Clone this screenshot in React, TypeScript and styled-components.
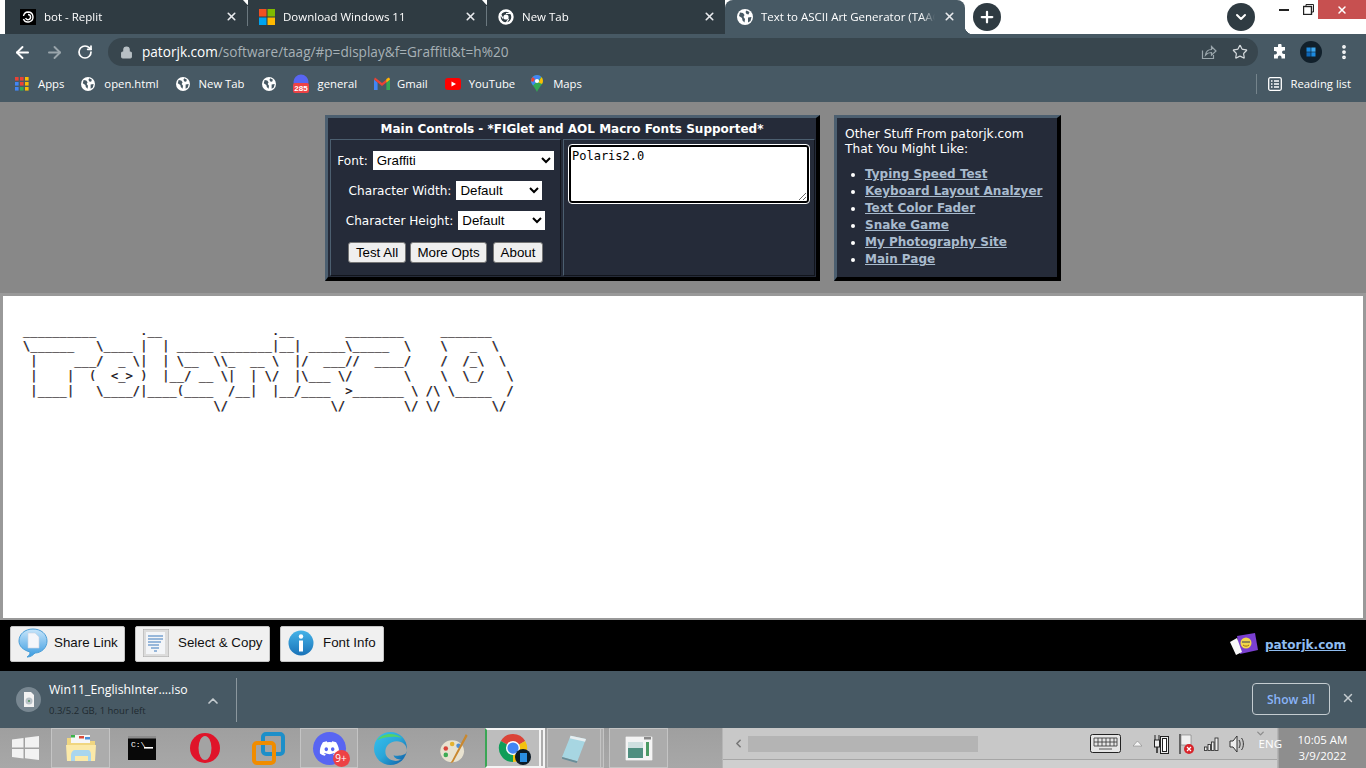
import styled, { createGlobalStyle } from "styled-components";
import { ArrowLeft, ArrowRight, RotateCw, Star, MoreVertical, ChevronDown, ChevronUp, Plus, X, Lock, ChevronLeft } from "lucide-react";
import { FaDiscord } from "react-icons/fa";
import type { ReactNode } from "react";

const GlobalStyle = createGlobalStyle`
  html, body { margin: 0; padding: 0; height: 768px; overflow: hidden; background: #888888; }
  * { box-sizing: border-box; }
`;

const CHROME_FONT = `"Open Sans", "Noto Sans", sans-serif`;
const PAGE_FONT = `"DejaVu Sans", sans-serif`;
const BAR = "#475964";
const DARK_TAB = "#2f3b42";

const Screen = styled.div`
  width: 1366px;
  height: 768px;
  display: flex;
  flex-direction: column;
  overflow: hidden;
  font-family: ${CHROME_FONT};
`;

/* ---------- tab strip ---------- */
const TabStrip = styled.div`
  height: 34px;
  background: #ffffff;
  display: flex;
  align-items: stretch;
  padding-left: 5px;
  flex: none;
`;
const Tab = styled.div<{ $active?: boolean; $w: number; $pl: number }>`
  width: ${(p) => p.$w}px;
  flex: none;
  background: ${(p) => (p.$active ? BAR : DARK_TAB)};
  color: #ffffff;
  display: flex;
  align-items: center;
  gap: 8px;
  padding: 0 9px 1px ${(p) => p.$pl}px;
  font-size: 11.5px;
  border-radius: ${(p) => (p.$active ? "8px 8px 0 0" : "0")};
  position: relative;
  ${(p) =>
    p.$active
      ? `
    &::before {
      content: "";
      position: absolute;
      left: -8px;
      bottom: 0;
      width: 8px;
      height: 8px;
      background: ${BAR};
    }
    &::after {
      content: "";
      position: absolute;
      right: -8px;
      bottom: 0;
      width: 8px;
      height: 8px;
      background: radial-gradient(circle at 100% 0, transparent 8px, ${BAR} 8.5px);
    }
  `
      : ""}
`;
const TabGroup = styled.div`
  display: flex;
  flex: none;
  position: relative;
  z-index: 1;
  background: ${DARK_TAB};
  border-radius: 8px;
`;
const TabDivider = styled.div`
  width: 1px;
  margin: 6px 0 8px;
  background: #6b787f;
  flex: none;
  position: relative;
  &::before {
    content: "";
    position: absolute;
    top: -6px;
    left: -4px;
    width: 9px;
    height: 5px;
    background: #ffffff;
    clip-path: polygon(0 0, 100% 0, 50% 100%);
  }
`;
const TabTitle = styled.span`
  flex: 1;
  white-space: nowrap;
  overflow: hidden;
  mask-image: linear-gradient(to right, #000 calc(100% - 14px), transparent);
`;
const TabClose = styled(X)`
  flex: none;
  width: 13px;
  height: 13px;
  stroke-width: 3;
  color: #e8eaed;
`;
const RoundButton = styled.div<{ $ml: number }>`
  width: 28px;
  height: 28px;
  margin: 3px 0 0 ${(p) => p.$ml}px;
  border-radius: 50%;
  background: ${DARK_TAB};
  color: #ffffff;
  display: flex;
  align-items: center;
  justify-content: center;
  flex: none;
`;
const WindowButtons = styled.div`
  margin-left: 15px;
  display: flex;
  flex: none;
  height: 19px;
  align-items: flex-start;
`;
const WinBtn = styled.div<{ $w: number; $close?: boolean }>`
  width: ${(p) => p.$w}px;
  height: 19px;
  background: ${(p) => (p.$close ? "#c75050" : "transparent")};
  color: ${(p) => (p.$close ? "#fff" : "#222")};
  display: flex;
  align-items: center;
  justify-content: center;
`;

/* ---------- toolbar ---------- */
const Toolbar = styled.div`
  height: 32px;
  background: ${BAR};
  flex: none;
  display: flex;
  align-items: flex-end;
  padding-left: 13px;
  color: #ffffff;
`;
const NavBtn = styled.div<{ $dim?: boolean; $w: number }>`
  width: ${(p) => p.$w}px;
  height: 28px;
  display: flex;
  align-items: center;
  color: ${(p) => (p.$dim ? "#9aa5ab" : "#ffffff")};
`;
const Omnibox = styled.div`
  width: 1150px;
  height: 28px;
  background: #38464e;
  border-radius: 14px;
  display: flex;
  align-items: center;
  padding: 0 10px 0 12px;
  font-size: 13.6px;
  margin-left: 3px;
`;
const Url = styled.div`
  margin-left: 9px;
  padding-bottom: 1px;
  flex: 1;
  color: #a7b1b6;
  white-space: nowrap;
  b { font-weight: 400; color: #ffffff; }
`;
const ToolIcons = styled.div<{ $ml?: number }>`
  display: flex;
  align-items: center;
  height: 28px;
  margin-left: ${(p) => p.$ml ?? 0}px;
`;

/* ---------- bookmarks ---------- */
const Bookmarks = styled.div`
  height: 36px;
  background: ${BAR};
  flex: none;
  display: flex;
  align-items: center;
  padding: 0 15px 1px 15px;
  color: #ffffff;
  font-size: 11.3px;
  gap: 17px;
`;
const Mark = styled.div<{ $gap?: number; $mr?: number }>`
  display: flex;
  align-items: center;
  gap: ${(p) => p.$gap ?? 9}px;
  margin-right: ${(p) => p.$mr ?? 0}px;
  white-space: nowrap;
`;
const ReadingList = styled(Mark)`
  margin-left: auto;
  border-left: 1px solid #75848c;
  height: 20px;
  padding-left: 11px;
`;

/* ---------- page ---------- */
const Page = styled.div`
  height: 191px;
  flex: none;
  background: #888888;
  display: flex;
  gap: 14px;
  padding: 13px 0 0 325px;
  font-family: ${PAGE_FONT};
  font-size: 12.25px;
  color: #ffffff;
`;
const Panel = styled.div<{ $w: number }>`
  width: ${(p) => p.$w}px;
  height: 166px;
  background: #252b39;
  border-style: solid;
  border-width: 3px 4px 4px 3px;
  border-color: #4c5f70 #000000 #000000 #4c5f70;
`;
const PanelTitle = styled.div`
  font-weight: 700;
  font-size: 12px;
  text-align: center;
  height: 21px;
  line-height: 22px;
`;
const PanelBody = styled.div`
  display: grid;
  grid-template-columns: 231px 252px;
  gap: 2px;
  padding: 0 0 0 2px;
`;
const Cell = styled.div`
  height: 137px;
  border-style: solid;
  border-width: 1px;
  border-color: #4c5f70 #11141b #11141b #4c5f70;
`;
const FormCell = styled(Cell)`
  display: flex;
  flex-direction: column;
  align-items: center;
  padding-top: 11px;
  gap: 11px;
`;
const FieldRow = styled.label`
  display: flex;
  align-items: center;
  gap: 5px;
  height: 19px;
  font-size: 12.1px;
`;
const Select = styled.select<{ $w: number }>`
  width: ${(p) => p.$w}px;
  height: 19px;
  border: 0;
  border-radius: 0;
  background: #ffffff;
  color: #000;
  padding: 0;
  font-family: "Liberation Sans", sans-serif;
  font-size: 13.33px;
`;
const ButtonRow = styled.div`
  display: flex;
  gap: 4px;
  margin-top: 1px;
`;
const FormButton = styled.button<{ $w: number; $ml?: number }>`
  width: ${(p) => p.$w}px;
  height: 21px;
  padding: 0;
  margin-left: ${(p) => p.$ml ?? 0}px;
  background: #efefef;
  border: 1px solid #767676;
  border-radius: 3px;
  color: #000;
  font-family: "Liberation Sans", sans-serif;
  font-size: 13.33px;
`;
const TextCell = styled(Cell)`
  padding: 5px 0 0 5px;
`;
const TextArea = styled.textarea`
  display: block;
  width: 240px;
  height: 58px;
  border: 2px solid #000000;
  outline: 1px solid #ffffff;
  border-radius: 3px;
  background: #fff;
  padding: 2px 1px;
  margin: 0;
  font-family: "DejaVu Sans Mono", monospace;
  font-size: 12px;
  line-height: 14px;
  color: #000;
`;
const SideText = styled.div`
  padding: 9px 0 0 8px;
  line-height: 15px;
`;
const SideList = styled.ul`
  margin: 9px 0 0;
  padding: 0 0 0 20px;
  line-height: 17px;
  li::marker { color: #ffffff; }
`;
const SideLink = styled.a`
  font-weight: 700;
  font-size: 12px;
  color: #a9bbce;
  text-decoration: underline;
`;

/* ---------- output ---------- */
const Output = styled.div`
  height: 327px;
  flex: none;
  background: #ffffff;
  border-style: solid;
  border-color: #999999;
  border-width: 3px 3px 2px 3px;
  padding: 28px 0 0 20px;
`;
const Ascii = styled.pre`
  margin: 0;
  font-family: "DejaVu Sans Mono", monospace;
  font-size: 12px;
  letter-spacing: 0.1px;
  line-height: 15px;
  color: #16161c;
  text-shadow: -0.4px 0 rgba(224, 130, 30, 0.55), 0.4px 0 rgba(40, 120, 230, 0.6);
`;

/* ---------- site bar ---------- */
const SiteBar = styled.div`
  height: 51px;
  flex: none;
  background: #000000;
  display: flex;
  align-items: flex-start;
  padding: 6px 20px 0 10px;
  gap: 10px;
`;
const SiteButton = styled.div<{ $w: number }>`
  width: ${(p) => p.$w}px;
  height: 36px;
  background: #f0f0f0;
  border: 1px solid #c4c4c4;
  border-radius: 2px;
  display: flex;
  align-items: center;
  gap: 6px;
  padding: 0 0 3px 7px;
  font-family: "Liberation Sans", sans-serif;
  font-size: 13.33px;
  color: #111;
`;
const SiteLabel = styled.span`
  margin-left: 3px;
`;
const SiteBrand = styled.a`
  margin: 7px 0 0 auto;
  display: flex;
  align-items: center;
  gap: 6px;
  font-family: ${PAGE_FONT};
  font-weight: 700;
  font-size: 12px;
  color: #8fbcef;
  text-decoration: underline;
`;

/* ---------- download bar ---------- */
const DownloadBar = styled.div`
  height: 57px;
  flex: none;
  background: ${BAR};
  display: flex;
  align-items: flex-start;
  color: #ffffff;
  padding: 7px 0 0 16px;
`;
const FileIcon = styled.div`
  width: 25px;
  height: 25px;
  margin-top: 9px;
  border-radius: 50%;
  background: #788791;
  display: flex;
  align-items: center;
  justify-content: center;
  flex: none;
`;
const FileText = styled.div`
  margin-left: 8px;
  width: 156px;
`;
const FileName = styled.div`
  font-size: 12.3px;
  line-height: 16px;
  margin-top: 4px;
  white-space: nowrap;
`;
const FileMeta = styled.div`
  font-size: 9.5px;
  color: #1f2a30;
  line-height: 13px;
  margin-top: 6px;
  white-space: nowrap;
`;
const DownloadSep = styled.div`
  width: 1px;
  height: 44px;
  margin-left: 15px;
  background: #8b979e;
`;
const ShowAll = styled.div`
  margin: 5px 0 0 auto;
  width: 78px;
  height: 32px;
  border: 1px solid #c4ccd0;
  border-radius: 4px;
  color: #8ab4f8;
  font-size: 12px;
  font-weight: 600;
  display: flex;
  align-items: center;
  justify-content: center;
`;
const BarClose = styled(X)`
  margin: 13px 11px 0 11px;
  width: 14px;
  height: 14px;
  stroke-width: 2.5;
  color: #c5ccd0;
`;

/* ---------- taskbar ---------- */
const Taskbar = styled.div`
  height: 40px;
  flex: none;
  background: linear-gradient(#9f9f9f, #a8a8a8);
  display: flex;
  align-items: stretch;
`;
const TaskItem = styled.div<{ $w: number; $boxed?: boolean; $active?: boolean; $mr?: number }>`
  width: ${(p) => p.$w}px;
  flex: none;
  margin-right: ${(p) => p.$mr ?? 0}px;
  display: flex;
  align-items: center;
  justify-content: center;
  background: ${(p) => (p.$active ? "#bdbdbd" : p.$boxed ? "#acacac" : "transparent")};
  border: ${(p) => (p.$active ? "2px solid #f4f4f4" : p.$boxed ? "1px solid #c4c4c4" : "0")};
  ${(p) => (p.$active ? "border-left-color:#3aa655;" : "")}
`;
const Sliver = styled.div<{ $w: number; $light?: boolean; $mr?: number }>`
  width: ${(p) => p.$w}px;
  flex: none;
  margin-right: ${(p) => p.$mr ?? 0}px;
  background: #acacac;
  border: 1px solid #c4c4c4;
  border-left: 0;
  ${(p) => (p.$light ? "border: 2px solid #f4f4f4; border-left: 0;" : "")}
`;
const DiscordBadge = styled.div`
  width: 33px;
  height: 33px;
  position: relative;
  border-radius: 50%;
  background: #5865f2;
  color: #fff;
  display: flex;
  align-items: center;
  justify-content: center;
`;
const RedDot = styled.span`
  position: absolute;
  right: -4px;
  bottom: -2px;
  width: 17px;
  height: 17px;
  border-radius: 50%;
  background: #ed4245;
  color: #fff;
  font-size: 10px;
  line-height: 17px;
  text-align: center;
`;
const ChromeWrap = styled.div`
  position: relative;
  width: 30px;
  height: 30px;
`;
const ProfileDot = styled.div`
  position: absolute;
  right: -3px;
  bottom: -2px;
  width: 16px;
  height: 16px;
  border-radius: 50%;
  background: #0c1a26;
  display: flex;
  align-items: center;
  justify-content: center;
  &::after {
    content: "";
    width: 7px;
    height: 9px;
    background: #2a8de0;
  }
`;
const Tray = styled.div`
  width: 556px;
  margin-left: 54px;
  background: #c8c8c8;
  border-left: 1px solid #b5b5b5;
  border-right: 1px solid #b5b5b5;
  flex: none;
  position: relative;
  display: flex;
  flex-direction: column;
`;
const TrayMain = styled.div`
  flex: 1;
  display: flex;
  align-items: center;
  padding-left: 9px;
  border-bottom: 1px solid #a6a6a6;
`;
const TrayFoot = styled.div`
  height: 8px;
  background: #cfcfcf;
`;
const ScrollThumb = styled.div`
  width: 230px;
  height: 16px;
  margin-left: 3px;
  background: #b4b4b4;
`;
const ScrollDown = styled(ChevronDown)`
  position: absolute;
  top: 0;
  right: 11px;
  width: 11px;
  height: 11px;
  stroke-width: 3;
  color: #8d8d8d;
`;
const TrayIcons = styled.div`
  margin-left: auto;
  margin-right: -5px;
  display: flex;
  align-items: center;
  gap: 8px;
  position: relative;
  z-index: 1;
`;
const TraySlot = styled.span<{ $ml: number }>`
  display: flex;
  margin-left: ${(p) => p.$ml}px;
`;
const Eng = styled.span`
  margin-left: 4px;
  color: #ffffff;
  font-size: 11.5px;
`;
const Clock = styled.div`
  flex: 1;
  margin-left: 1px;
  background: #8e8e8e;
  color: #ffffff;
  font-size: 11.5px;
  line-height: 16px;
  padding-top: 4px;
  text-align: center;
`;

/* ---------- icons ---------- */
const Globe = ({ size = 14 }: { size?: number }) => (
  <svg width={size} height={size} viewBox="0 0 16 16" style={{ flex: "none" }}>
    <circle cx="8" cy="8" r="8" fill="#fff" />
    <path d="M3 3.5l3 .5 1.5 2-1 2 1.5 2-.5 3.500-2-2-.5-2.500L2 7zM9.500 1.500l3 1.500-1 2.500-2-.5-1-2zM11 8.500l3.500-.5-1 4-2.500 1.500z" fill={BAR} />
  </svg>
);

const TabChrome = () => (
  <svg width="16" height="16" viewBox="0 0 16 16" fill="none" stroke="#fff" style={{ flex: "none" }}>
    <circle cx="8" cy="8" r="6.500" strokeWidth="2.400" />
    <circle cx="8" cy="8" r="2.600" fill="#fff" stroke="none" />
    <path d="M8 4.500h6.500M5 9.500 1.800 4M10.800 9.800 7.500 15" strokeWidth="1.200" />
  </svg>
);

const ChromeColor = () => (
  <svg width="30" height="30" viewBox="0 0 32 32">
    <path d="M16 16 3 8.500A15 15 0 0 1 29 8.500z" fill="#db4437" />
    <path d="M16 16 29 8.500A15 15 0 0 1 16 31z" fill="#f4c20d" />
    <path d="M16 16V31A15 15 0 0 1 3 8.500z" fill="#0f9d58" />
    <circle cx="16" cy="16" r="7.500" fill="#fff" />
    <circle cx="16" cy="16" r="6" fill="#4285f4" />
  </svg>
);

const ReplitIcon = () => (
  <svg width="16" height="16" viewBox="0 0 16 16" style={{ flex: "none" }}>
    <rect width="16" height="16" fill="#000" />
    <path d="M8 3a5 5 0 1 1-4.600 7M8 5.500a2.600 2.600 0 1 1-2.400 3.600M3.500 7A4.800 4.800 0 0 1 8 3" stroke="#fff" strokeWidth="1.400" fill="none" />
  </svg>
);

const MsLogo = () => (
  <svg width="16" height="16" viewBox="0 0 16 16" style={{ flex: "none" }}>
    <rect width="7.500" height="7.500" fill="#f25022" />
    <rect x="8.500" width="7.500" height="7.500" fill="#7fba00" />
    <rect y="8.500" width="7.500" height="7.500" fill="#00a4ef" />
    <rect x="8.500" y="8.500" width="7.500" height="7.500" fill="#ffb900" />
  </svg>
);

const AppsGrid = () => (
  <svg width="14" height="14" viewBox="0 0 14 14" style={{ flex: "none" }}>
    {["#ea4335", "#ea4335", "#fbbc04", "#4285f4", "#ea4335", "#fbbc04", "#4285f4", "#34a853", "#fbbc04"].map((c, i) => (
      <rect key={i} x={(i % 3) * 5} y={Math.floor(i / 3) * 5} width="3.600" height="3.600" fill={c} />
    ))}
  </svg>
);

const BadgeIcon = () => (
  <svg width="16" height="20" viewBox="0 0 16 20" style={{ flex: "none" }}>
    <circle cx="8" cy="8" r="7.500" fill="#5865f2" />
    <rect y="9" width="16" height="10" rx="2" fill="#ed4245" />
    <text x="8" y="17" textAnchor="middle" fontSize="8" fontWeight="700" fontFamily="Liberation Sans" fill="#fff">285</text>
  </svg>
);

const GmailIcon = () => (
  <svg width="16" height="13" viewBox="0 0 16 13" style={{ flex: "none" }}>
    <path d="M0 2.500V13h3.600V5.500z" fill="#4285f4" />
    <path d="M16 2.500V13h-3.600V5.500z" fill="#34a853" />
    <path d="M0 2.500 1 .5 8 6l7-5.500 1 2L8 9z" fill="#ea4335" />
    <path d="M12.400 2 15 .4 16 2.500 12.400 5.500z" fill="#fbbc04" />
  </svg>
);

const YouTubeIcon = () => (
  <svg width="16" height="12" viewBox="0 0 16 12" style={{ flex: "none" }}>
    <rect width="16" height="12" rx="3" fill="#f00" />
    <path d="M6.500 3.500v5L11 6z" fill="#fff" />
  </svg>
);

const MapsIcon = () => (
  <svg width="12" height="17" viewBox="0 0 12 17" style={{ flex: "none", margin: "0 2px" }}>
    <path d="M6 0a6 6 0 0 1 6 6c0 3.500-4 6-6 11C4 12 0 9.500 0 6a6 6 0 0 1 6-6z" fill="#34a853" />
    <path d="M6 0a6 6 0 0 1 4.400 2L2 10.500A7 7 0 0 1 0 6a6 6 0 0 1 6-6z" fill="#4285f4" />
    <path d="M1.600 1.900 4 4 2 7 0 6a6 6 0 0 1 1.600-4.100z" fill="#ea4335" />
    <path d="M10.400 2A6 6 0 0 1 12 6c0 1-.4 2-1 3L7.500 7.500z" fill="#fbbc04" />
    <circle cx="6" cy="6" r="2.100" fill="#fff" />
  </svg>
);

const ListIcon = () => (
  <svg width="14" height="14" viewBox="0 0 14 14" fill="none" stroke="#fff" style={{ flex: "none" }}>
    <rect x=".7" y=".7" width="12.600" height="12.600" rx="1.500" strokeWidth="1.300" />
    <path d="M3 4h1.500M6 4h5M3 7h1.500M6 7h5M3 10h1.500M6 10h5" strokeWidth="1.300" />
  </svg>
);

const ShareOut = () => (
  <svg width="18" height="18" viewBox="0 0 18 18" fill="none" stroke="#9aa6ac" strokeWidth="1.200" style={{ flex: "none" }}>
    <path d="M2.500 7.500v8h11v-3.500" />
    <path d="M5.500 12c.5-3.500 3-5.500 6-5.500V3.500L16 8l-4.500 4.200V9.500C9 9.500 7 10.200 5.500 12z" />
  </svg>
);

const PuzzleFill = () => (
  <svg width="16" height="16" viewBox="0 0 16 16" style={{ flex: "none" }}>
    <path d="M6 1.500a1.800 1.800 0 0 1 3.600 0V3H13v3.400h-1.200a1.800 1.800 0 0 0 0 3.600H13v4.500H9.500v-1.200a1.800 1.800 0 0 0-3.600 0v1.200H2v-3.900h1.200a1.800 1.800 0 0 0 0-3.600H2V3h4z" fill="#fff" />
  </svg>
);

const ProfileIcon = () => (
  <svg width="22" height="22" viewBox="0 0 22 22" style={{ flex: "none", marginLeft: 12 }}>
    <circle cx="11" cy="11" r="11" fill="#11202b" />
    <rect x="6.500" y="6.500" width="4.200" height="4.200" fill="#1b8ae0" />
    <rect x="11.300" y="6.500" width="4.200" height="4.200" fill="#3ea7ee" />
    <rect x="6.500" y="11.300" width="4.200" height="4.200" fill="#0e67b8" />
    <rect x="11.300" y="11.300" width="4.200" height="4.200" fill="#1b8ae0" />
  </svg>
);

const ShareBubble = () => (
  <svg width="30" height="30" viewBox="0 0 30 30" style={{ flex: "none" }}>
    <defs>
      <linearGradient id="bubble" x1="0" y1="0" x2="0" y2="1">
        <stop offset="0" stopColor="#c8e6fb" />
        <stop offset="1" stopColor="#3a9be0" />
      </linearGradient>
    </defs>
    <path d="M15 1c8 0 14 5 14 12s-6 12-12 12c-2 2-4 4-8 4 2-1 3-3 3-5C5 22 1 18 1 13 1 6 7 1 15 1z" fill="url(#bubble)" stroke="#4b9fd8" />
    <path d="M10 5h7l4 4v11H10z" fill="#f4f6fa" stroke="#cdd5e0" strokeWidth=".6" />
  </svg>
);

const CopyDoc = () => (
  <svg width="26" height="28" viewBox="0 0 26 28" style={{ flex: "none" }}>
    <rect width="26" height="28" rx="1.500" fill="#dcdcdc" stroke="#a8a8a8" />
    <rect x="3" y="3" width="19" height="22" fill="#f3f5f8" />
    <path d="M5 7h15M5 10h15M5 13h13M5 16h11M8 19h8M11 22h3" stroke="#7aa3cf" strokeWidth="1.600" />
  </svg>
);

const InfoOrb = () => (
  <svg width="26" height="26" viewBox="0 0 26 26" style={{ flex: "none" }}>
    <defs>
      <linearGradient id="orb" x1="0" y1="0" x2="0" y2="1">
        <stop offset="0" stopColor="#45b3e8" />
        <stop offset="1" stopColor="#1a73b8" />
      </linearGradient>
    </defs>
    <circle cx="13" cy="13" r="12.500" fill="url(#orb)" />
    <rect x="11" y="10.500" width="4" height="11" fill="#fff" />
    <circle cx="13" cy="6.500" r="2.200" fill="#fff" />
  </svg>
);

const BrandIcon = () => (
  <svg width="30" height="24" viewBox="0 0 30 24" style={{ flex: "none" }}>
    <path d="M8 3 26 0l3 17-18 4z" fill="#7a3fd0" />
    <path d="M1 9 8 5l5 14-6 3z" fill="#f8f8f8" />
    <circle cx="17" cy="10" r="5.500" fill="#f2d74a" />
    <path d="M13 9h8" stroke="#555" strokeWidth="1.200" />
    <path d="M14 12c1.500 1.500 4.500 1.500 6 0" stroke="#a06a10" fill="none" />
  </svg>
);

const IsoFile = () => (
  <svg width="12" height="15" viewBox="0 0 12 15">
    <path d="M1 0h7l3 3v12H1z" fill="#f3f3f3" />
    <circle cx="6" cy="9" r="3.500" fill="#b9c2c8" />
    <circle cx="6" cy="9" r="1" fill="#4a8f55" />
  </svg>
);

const WinLogo = () => (
  <svg width="27" height="24" viewBox="0 0 27 24">
    <path d="M0 3.500 11.500 2v9.500H0zM13 1.700 27 0v11.500H13zM0 13h11.500v9.500L0 21zM13 13h14v11l-14-1.800z" fill="#f2f2f2" />
  </svg>
);

const Folder = () => (
  <svg width="32" height="30" viewBox="0 0 32 30">
    <path d="M2 5h12l3 3h13v20H2z" fill="#f0d680" />
    <rect x="6" y="2" width="19" height="8" fill="#f6f6f6" />
    <rect x="6" y="2" width="4" height="2.500" fill="#3bb44a" />
    <rect x="14" y="3" width="5" height="2.500" fill="#d84a3a" />
    <rect x="20" y="4" width="5" height="2.500" fill="#4a90d9" />
    <path d="M1 12h30l-1 16H2z" fill="#fbe9a8" />
    <path d="M6 22c0-3 2-5 4-5h13c2 0 3 2 3 5v6h-3v-5H10v5H6z" fill="#a9d6ee" />
  </svg>
);

const Cmd = () => (
  <svg width="28" height="24" viewBox="0 0 28 24">
    <rect width="28" height="24" fill="#080808" />
    <rect width="28" height="2.500" fill="#8c8c8c" />
    <text x="3" y="11" fontSize="8" fontFamily="Liberation Mono" fill="#fff">C:\</text>
    <rect x="16" y="11" width="9" height="1.600" fill="#fff" />
  </svg>
);

const Opera = () => (
  <svg width="30" height="30" viewBox="0 0 30 30">
    <ellipse cx="15" cy="15" rx="15" ry="15" fill="#e0142a" />
    <ellipse cx="15" cy="15" rx="6.500" ry="12" fill="#a3a3a3" />
  </svg>
);

const Vmware = () => (
  <svg width="33" height="33" viewBox="0 0 33 33">
    <rect x="11" y="2" width="20" height="20" rx="3" fill="none" stroke="#1d8fc9" strokeWidth="4" />
    <rect x="2" y="11" width="20" height="20" rx="3" fill="none" stroke="#f08c00" strokeWidth="4" />
  </svg>
);

const Edge = () => (
  <svg width="33" height="33" viewBox="0 0 32 32">
    <defs>
      <linearGradient id="edge" x1="0" y1="0" x2="1" y2="1">
        <stop offset="0" stopColor="#35c1f1" />
        <stop offset=".5" stopColor="#2aa6d8" />
        <stop offset="1" stopColor="#0c59a4" />
      </linearGradient>
    </defs>
    <circle cx="16" cy="16" r="16" fill="url(#edge)" />
    <path d="M32 18c0-5-4-9-10-9-7 0-11 5-11 10 0 5 4 9 10 9 2 0 4-.5 6-1.500-2 .2-7 0-8-4 3 1 13 1 13-4.500z" fill="#a9a9a9" />
    <path d="M3 8C8 1 20 0 27 6c-6-2-15-2-24 2z" fill="#53d26a" />
  </svg>
);

const Palette = () => (
  <svg width="32" height="31" viewBox="0 0 32 34">
    <ellipse cx="14" cy="20" rx="13" ry="12" fill="#e8e2d0" />
    <circle cx="7" cy="17" r="2.500" fill="#d8453a" />
    <circle cx="7" cy="24" r="2.500" fill="#3dab54" />
    <circle cx="14" cy="12" r="2.500" fill="#e4b22f" />
    <circle cx="21" cy="14" r="2.500" fill="#4f8fd6" />
    <path d="M29 1 14 30l-2 3 3-1L31 3z" fill="#c9882f" />
  </svg>
);

const Notepad = () => (
  <svg width="26" height="29" viewBox="0 0 30 34">
    <path d="M11 2 29 6 19 32 1 27z" fill="#a7d6e2" />
    <path d="M11 2 29 6l-1 3-18-4z" fill="#e8eef0" />
    <path d="M1 27l18 5-1 2L1 29z" fill="#678d99" />
  </svg>
);

const WindowApp = () => (
  <svg width="28" height="25" viewBox="0 0 28 25">
    <rect width="28" height="25" fill="#f4f4f4" stroke="#999" />
    <rect x="3" y="6" width="15" height="16" fill="#4f8f80" />
    <rect x="3" y="6" width="15" height="6" fill="#cfe0e0" />
    <rect x="21" y="6" width="3" height="14" fill="#4c9a64" />
    <rect x="19" y="1" width="7" height="2.500" fill="#8a8a8a" />
  </svg>
);

const Keyboard = () => (
  <svg width="31" height="19" viewBox="0 0 31 19" fill="none">
    <rect x=".5" y=".5" width="30" height="18" rx="2" fill="#e6e6e6" stroke="#222" />
    <path d="M4 4h23v8H4zM4 8h23M8 4v8M12 4v8M16 4v8M20 4v8M24 4v8M9 15h13" stroke="#444" strokeWidth=".9" />
  </svg>
);

const TrayUp = () => (
  <svg width="9" height="6" viewBox="0 0 9 6" style={{ margin: "0 4px" }}>
    <path d="M4.500 0 9 5H0z" fill="#f4f4f4" stroke="#777" strokeWidth=".5" />
  </svg>
);

const Battery = () => (
  <svg width="15" height="20" viewBox="0 0 15 20" fill="none" stroke="#222">
    <rect x="6.500" y="2.500" width="8" height="17" fill="#eee" />
    <rect x="8.500" y="4.500" width="4" height="13" fill="#fff" />
    <path d="M1 1v5M5 1v5" />
    <rect x=".5" y="6" width="5" height="7" fill="#eee" />
    <path d="M3 13v6" strokeWidth="1.500" />
  </svg>
);

const FlagX = () => (
  <svg width="16" height="20" viewBox="0 0 16 20">
    <path d="M1 0v20" stroke="#222" strokeWidth="1.200" />
    <path d="M2 1h10v10H2z" fill="#f0f0f0" stroke="#777" strokeWidth=".6" />
    <circle cx="10" cy="15" r="5" fill="#d8232a" />
    <path d="M8 13l4 4M12 13l-4 4" stroke="#fff" strokeWidth="1.200" />
  </svg>
);

const Signal = () => (
  <svg width="16" height="14" viewBox="0 0 16 14" fill="#eee" stroke="#222" strokeWidth=".8">
    <rect x=".5" y="10" width="2.500" height="3.500" />
    <rect x="4" y="7.500" width="2.500" height="6" />
    <rect x="7.500" y="5" width="2.500" height="8.500" />
    <rect x="11" y="1" width="3" height="12.500" />
  </svg>
);

const Speaker = () => (
  <svg width="18" height="20" viewBox="0 0 18 20" fill="none" stroke="#333" strokeWidth="1">
    <path d="M1 7h3l4-5v16l-4-5H1z" fill="#eee" />
    <path d="M10 6c1.500 2 1.500 6 0 8M12.500 4c2.500 3 2.500 9 0 12" />
  </svg>
);

const Bookmark = ({ icon, children, gap, mr }: { icon: ReactNode; children?: ReactNode; gap?: number; mr?: number }) => (
  <Mark $gap={gap} $mr={mr}>
    {icon}
    {children && <span>{children}</span>}
  </Mark>
);

const ASCII_ART = String.raw`__________      .__               .__       ________     _______   
\______   \____ |  | _____ _______|__| _____\_____  \    \   _  \  
 |     ___/  _ \|  | \__  \\_  __ \  |/  ___//  ____/    /  /_\  \ 
 |    |  (  <_> )  |__/ __ \|  | \/  |\___ \/       \    \  \_/   \
 |____|   \____/|____(____  /__|  |__/____  >_______ \ /\ \_____  /
                          \/              \/        \/ \/       \/ `;

const links = ["Typing Speed Test", "Keyboard Layout Analzyer", "Text Color Fader", "Snake Game", "My Photography Site", "Main Page"];

export default function App() {
  return (
    <Screen>
      <GlobalStyle />
      <TabStrip>
        <TabGroup>
          <Tab $w={242} $pl={15}>
            <ReplitIcon />
            <TabTitle>bot - Replit</TabTitle>
            <TabClose />
          </Tab>
          <TabDivider />
          <Tab $w={238} $pl={11}>
            <MsLogo />
            <TabTitle>Download Windows 11</TabTitle>
            <TabClose />
          </Tab>
          <TabDivider />
          <Tab $w={238} $pl={11}>
            <TabChrome />
            <TabTitle>New Tab</TabTitle>
            <TabClose />
          </Tab>
        </TabGroup>
        <Tab $active $w={240} $pl={12}>
          <Globe size={16} />
          <TabTitle>Text to ASCII Art Generator (TAAG)</TabTitle>
          <TabClose />
        </Tab>
        <RoundButton $ml={8}>
          <Plus size={18} strokeWidth={3} />
        </RoundButton>
        <RoundButton $ml={226}>
          <ChevronDown size={16} strokeWidth={3} />
        </RoundButton>
        <WindowButtons>
          <WinBtn $w={28}>
            <svg width="10" height="3"><rect width="10" height="2" y="1" fill="#222" /></svg>
          </WinBtn>
          <WinBtn $w={20}>
            <svg width="11" height="11" viewBox="0 0 11 11" fill="none" stroke="#222"><rect x=".5" y="2.500" width="8" height="8" strokeWidth="1.400" /><path d="M3 2V.5h7.500V8H9" /></svg>
          </WinBtn>
          <WinBtn $w={48} $close>
            <X size={12} strokeWidth={3} />
          </WinBtn>
        </WindowButtons>
      </TabStrip>

      <Toolbar>
        <NavBtn $w={32}><ArrowLeft size={19} strokeWidth={2.4} /></NavBtn>
        <NavBtn $w={32} $dim><ArrowRight size={19} strokeWidth={2.4} /></NavBtn>
        <NavBtn $w={28}><RotateCw size={16} strokeWidth={2.6} /></NavBtn>
        <Omnibox>
          <Lock size={13} color="#b8c0c5" fill="#b8c0c5" />
          <Url><b>patorjk.com</b>/software/taag/#p=display&amp;f=Graffiti&amp;t=h%20</Url>
          <ToolIcons>
            <ShareOut />
            <Star size={16} color="#d5dadd" strokeWidth={1.8} style={{ marginLeft: 14 }} />
          </ToolIcons>
        </Omnibox>
        <ToolIcons $ml={14}>
          <PuzzleFill />
          <ProfileIcon />
          <MoreVertical size={18} strokeWidth={3} style={{ marginLeft: 13 }} />
        </ToolIcons>
      </Toolbar>

      <Bookmarks>
        <Bookmark icon={<AppsGrid />}>Apps</Bookmark>
        <Bookmark icon={<Globe />}>open.html</Bookmark>
        <Bookmark icon={<Globe />}>New Tab</Bookmark>
        <Bookmark icon={<Globe />} />
        <Bookmark icon={<BadgeIcon />}>general</Bookmark>
        <Bookmark icon={<GmailIcon />} gap={7}>Gmail</Bookmark>
        <Bookmark icon={<YouTubeIcon />} gap={8} mr={-3}>YouTube</Bookmark>
        <Bookmark icon={<MapsIcon />} gap={8}>Maps</Bookmark>
        <ReadingList>
          <ListIcon />
          <span>Reading list</span>
        </ReadingList>
      </Bookmarks>

      <Page>
        <Panel $w={495}>
          <PanelTitle>Main Controls - *FIGlet and AOL Macro Fonts Supported*</PanelTitle>
          <PanelBody>
            <FormCell>
              <FieldRow>
                Font:
                <Select $w={181} defaultValue="Graffiti"><option>Graffiti</option></Select>
              </FieldRow>
              <FieldRow>
                Character Width:
                <Select $w={86} defaultValue="Default"><option>Default</option></Select>
              </FieldRow>
              <FieldRow>
                Character Height:
                <Select $w={87} defaultValue="Default"><option>Default</option></Select>
              </FieldRow>
              <ButtonRow>
                <FormButton $w={58}>Test All</FormButton>
                <FormButton $w={77}>More Opts</FormButton>
                <FormButton $w={50} $ml={2}>About</FormButton>
              </ButtonRow>
            </FormCell>
            <TextCell>
              <TextArea defaultValue="Polaris2.0" readOnly />
            </TextCell>
          </PanelBody>
        </Panel>
        <Panel $w={227}>
          <SideText>
            Other Stuff From patorjk.com
            <br />
            That You Might Like:
            <SideList>
              {links.map((l) => (
                <li key={l}><SideLink>{l}</SideLink></li>
              ))}
            </SideList>
          </SideText>
        </Panel>
      </Page>

      <Output>
        <Ascii>{ASCII_ART}</Ascii>
      </Output>

      <SiteBar>
        <SiteButton $w={115}><ShareBubble />Share Link</SiteButton>
        <SiteButton $w={135}><CopyDoc /><SiteLabel>Select &amp; Copy</SiteLabel></SiteButton>
        <SiteButton $w={104}><InfoOrb /><SiteLabel>Font Info</SiteLabel></SiteButton>
        <SiteBrand><BrandIcon />patorjk.com</SiteBrand>
      </SiteBar>

      <DownloadBar>
        <FileIcon><IsoFile /></FileIcon>
        <FileText>
          <FileName>Win11_EnglishInter....iso</FileName>
          <FileMeta>0.3/5.2 GB, 1 hour left</FileMeta>
        </FileText>
        <ChevronUp size={16} color="#c5ccd0" strokeWidth={2.5} style={{ marginTop: 15 }} />
        <DownloadSep />
        <ShowAll>Show all</ShowAll>
        <BarClose />
      </DownloadBar>

      <Taskbar>
        <TaskItem $w={51}><WinLogo /></TaskItem>
        <TaskItem $w={59} $boxed><Folder /></TaskItem>
        <TaskItem $w={64}><Cmd /></TaskItem>
        <TaskItem $w={62}><Opera /></TaskItem>
        <TaskItem $w={64}><Vmware /></TaskItem>
        <TaskItem $w={58} $boxed>
          <DiscordBadge>
            <FaDiscord size={21} />
            <RedDot>9+</RedDot>
          </DiscordBadge>
        </TaskItem>
        <TaskItem $w={64}><Edge /></TaskItem>
        <TaskItem $w={63}><Palette /></TaskItem>
        <TaskItem $w={56} $active>
          <ChromeWrap>
            <ChromeColor />
            <ProfileDot />
          </ChromeWrap>
        </TaskItem>
        <Sliver $w={4} $light $mr={2} />
        <TaskItem $w={54} $boxed><Notepad /></TaskItem>
        <Sliver $w={3} $mr={5} />
        <TaskItem $w={59} $boxed><WindowApp /></TaskItem>
        <Tray>
          <ScrollDown />
          <TrayMain>
            <ChevronLeft size={13} strokeWidth={3} color="#777" />
            <ScrollThumb />
            <TrayIcons>
              <Keyboard />
              <TrayUp />
              <Battery />
              <TraySlot $ml={2}><FlagX /></TraySlot>
              <TraySlot $ml={1}><Signal /></TraySlot>
              <TraySlot $ml={1}><Speaker /></TraySlot>
              <Eng>ENG</Eng>
            </TrayIcons>
          </TrayMain>
          <TrayFoot />
        </Tray>
        <Clock>
          <div>10:05 AM</div>
          <div>3/9/2022</div>
        </Clock>
      </Taskbar>
    </Screen>
  );
}
